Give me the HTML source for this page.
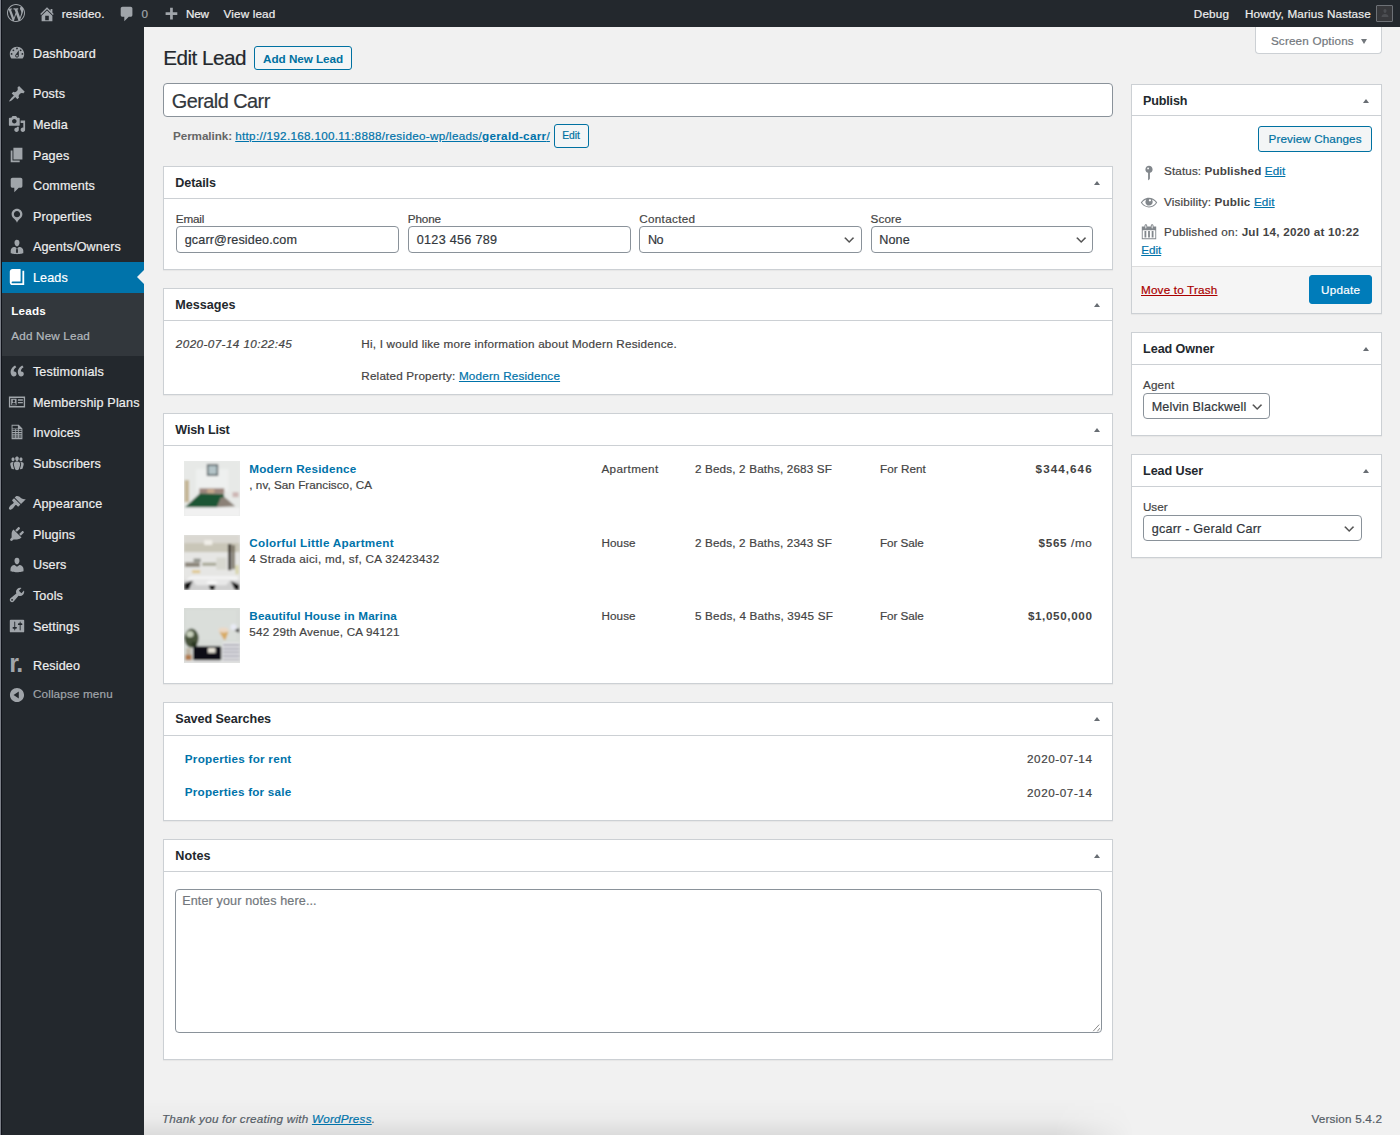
<!DOCTYPE html>
<html lang="en">
<head>
<meta charset="utf-8">
<title>Edit Lead ‹ resideo. — WordPress</title>
<style>
*{box-sizing:border-box}
html,body{margin:0;padding:0}
body{width:1400px;height:1135px;overflow:hidden;background:#f1f1f1;font-family:"Liberation Sans",sans-serif;font-size:11.7px;color:#444;line-height:1.4;position:relative;-webkit-text-stroke:.2px}
a{color:#0073aa;text-decoration:underline}
svg{display:block}
/* ---------- admin bar ---------- */
#bar{position:absolute;left:0;top:0;width:1400px;height:27.4px;background:#23282d;color:#eee;font-size:11.7px;z-index:5}
#bar .t{position:absolute;top:0;line-height:27px;white-space:nowrap;color:#eee}
#bar .i{position:absolute}
/* ---------- admin menu ---------- */
#menu{position:absolute;left:0;top:27px;width:144px;height:1108px;background:#23282d;z-index:4}
#menu ul{list-style:none;margin:0;padding:0}
#menu > ul{padding-top:10.9px}
#menu li.m{height:30.6px;position:relative;color:#eee;font-size:12.6px;line-height:32.4px;padding-left:32.9px;white-space:nowrap;letter-spacing:.15px}
#menu li.m svg{position:absolute;left:7.5px;top:6.3px;width:18px;height:18px;fill:#a0a5aa}
#menu li.sep{height:9.9px}
#menu li.cur{background:#0073aa;color:#fff}
#menu li.cur svg{fill:#fff}
#menu li.cur:after{content:"";position:absolute;right:0;top:50%;margin-top:-7.2px;border:7.2px solid transparent;border-right-color:#f1f1f1}
#menu li.sub{background:#32373c;height:63.4px;padding:6.3px 0 7.2px;font-size:11.7px}
#menu li.sub div{padding:0 11.3px;height:24.9px;line-height:24.9px;color:#b4b9be;letter-spacing:.17px}
#menu li.sub div.on{color:#fff;font-weight:bold}
#menu li.col{color:#a0a5aa;font-size:11.7px}

/* ---------- content ---------- */
#content{position:absolute;left:0;top:0;width:1400px;height:1135px}
.abs{position:absolute}
h1{position:absolute;left:163.2px;top:45.1px;margin:0;font-size:20.7px;font-weight:400;color:#23282d;line-height:1.3;white-space:nowrap}
.btn{position:absolute;border:1px solid #0071a1;border-radius:3px;background:#f3f5f6;color:#0071a1;font-size:11.7px;text-align:center;white-space:nowrap;text-decoration:none}
.btn.b{font-weight:bold}
#screenopt{position:absolute;left:1255.4px;top:27px;width:126.4px;height:27.2px;background:#fff;border:1px solid #ccd0d4;border-top:none;border-radius:0 0 4px 4px;color:#72777c;font-size:11.7px;line-height:28px;padding-left:14.5px}
#title{position:absolute;left:163.4px;top:83.3px;width:949.4px;height:33.9px;border:1px solid #8a929a;border-radius:4px;background:#fff;font-size:19.9px;line-height:35.2px;padding-left:7.4px;color:#32373c;white-space:nowrap}
#perma{position:absolute;left:173px;top:127.5px;font-size:11.7px;line-height:16.4px;color:#666;white-space:nowrap}
#perma b{color:#666}
.box{position:absolute;background:#fff;border:1px solid #ccd0d4;box-shadow:0 1px 1px rgba(0,0,0,.04)}
.box h2{margin:0;height:31.8px;border-bottom:1px solid #ccd0d4;font-size:12.6px;font-weight:bold;color:#23282d;line-height:32.2px;padding-left:11.3px;white-space:nowrap}
.box .tg{position:absolute;right:12.1px;top:14px;width:0;height:0;border:3.7px solid transparent;border-top:none;border-bottom:4.9px solid #686d73}
.L{left:163px;width:950px}
.R{left:1130.8px;width:251.4px}
.lbl{position:absolute;font-size:11.7px;line-height:16px;color:#444;white-space:nowrap}
.inp{position:absolute;height:26.6px;border:1px solid #8a929a;border-radius:4px;background:#fff;font-size:12.6px;line-height:26.4px;padding-left:7.5px;color:#32373c;white-space:nowrap}
.inp svg{position:absolute;right:4.5px;top:6px;width:14.4px;height:14.4px}
.tx{position:absolute;white-space:nowrap;font-size:11.7px;line-height:16.4px;color:#444}
.tx b{color:#444}
.lk{color:#0073aa;font-weight:bold;text-decoration:none}
#foot-l{position:absolute;left:162px;top:1111px;font-size:11.7px;font-style:italic;color:#555d66;line-height:16px;white-space:nowrap}
#foot-r{position:absolute;left:1311.4px;top:1111px;font-size:11.7px;color:#555d66;line-height:16px;white-space:nowrap}
#botgrad{position:absolute;left:144px;top:1098px;width:990px;height:37px;background:linear-gradient(to bottom,rgba(0,0,0,0),rgba(0,0,0,.025) 55%,rgba(0,0,0,.09));-webkit-mask-image:linear-gradient(to right,#000 92%,transparent);mask-image:linear-gradient(to right,#000 92%,transparent)}
.th{position:absolute;left:184.3px;width:55.6px;height:55.3px;background:#e6e6e6;overflow:hidden}
.th svg{width:100%;height:100%}
#screenopt i{position:absolute;left:104.2px;top:11.8px;border:3.8px solid transparent;border-bottom:none;border-top:5.4px solid #72777c}
.rlogo{position:absolute;left:9.2px;top:-1.2px;font-size:25px;line-height:normal;font-weight:bold;color:#a0a5aa;letter-spacing:-1.3px;-webkit-text-stroke:0}
#edge{position:absolute;left:0;top:0;width:1px;height:1135px;background:#7b7f88;z-index:9}
#edge2{position:absolute;left:1px;top:0;width:1px;height:1135px;background:#10131a;z-index:9}
b,.b,h2,.lk,#menu li.sub div.on{-webkit-text-stroke:0}
/*FIT*/
#b1{letter-spacing:0.174px}
#b3{letter-spacing:-0.196px}
#b4{letter-spacing:0.157px}
#b5{letter-spacing:0.166px}
#b6{letter-spacing:0.168px}
#so{letter-spacing:0.173px}
#h1{letter-spacing:-0.520px}
#anl{letter-spacing:-0.046px}
#ttl{letter-spacing:-0.543px}
#pm1{letter-spacing:-0.081px}
#pm2{letter-spacing:0.298px}
#pme{letter-spacing:-0.043px}
#hd1{letter-spacing:-0.094px}
#l1{letter-spacing:-0.163px}
#l2{letter-spacing:-0.133px}
#l3{letter-spacing:0.332px}
#l4{letter-spacing:0.078px}
#i1{letter-spacing:0.135px}
#i2{letter-spacing:0.309px}
#i3{letter-spacing:-0.473px}
#i4{letter-spacing:0.083px}
#hd2{letter-spacing:-0.016px}
#m1{letter-spacing:0.415px}
#m2{letter-spacing:0.215px}
#m3{letter-spacing:0.191px}
#hd3{letter-spacing:-0.174px}
#w1a{letter-spacing:0.199px}
#w1b{letter-spacing:0.035px}
#w1c{letter-spacing:0.362px}
#w1d{letter-spacing:0.166px}
#w1e{letter-spacing:0.057px}
#w1f{letter-spacing:1.047px}
#w2a{letter-spacing:0.297px}
#w2b{letter-spacing:0.280px}
#w2c{letter-spacing:0.112px}
#w2d{letter-spacing:0.166px}
#w2e{letter-spacing:-0.063px}
#w2f{letter-spacing:0.647px}
#w3a{letter-spacing:0.163px}
#w3b{letter-spacing:0.198px}
#w3c{letter-spacing:0.112px}
#w3d{letter-spacing:0.204px}
#w3e{letter-spacing:-0.063px}
#w3f{letter-spacing:0.611px}
#hd4{letter-spacing:-0.061px}
#s1{letter-spacing:0.245px}
#s2{letter-spacing:0.209px}
#s3{letter-spacing:0.569px}
#s4{letter-spacing:0.569px}
#hd5{letter-spacing:0.044px}
#ph{letter-spacing:0.123px}
#hd6{letter-spacing:-0.198px}
#pv{letter-spacing:0.103px}
#p1{letter-spacing:0.107px}
#p2{letter-spacing:0.157px}
#p3{letter-spacing:0.246px}
#p4{letter-spacing:-0.040px}
#p5{letter-spacing:0.187px}
#upd{letter-spacing:0.254px}
#hd7{letter-spacing:-0.073px}
#l5{letter-spacing:0.190px}
#i5{letter-spacing:0.143px}
#hd8{letter-spacing:-0.107px}
#l6{letter-spacing:0.032px}
#i6{letter-spacing:0.218px}
#f1{letter-spacing:0.226px}
#f2{letter-spacing:0.197px}
/*ENDFIT*/
</style>
</head>
<body>
<div id="edge"></div><div id="edge2"></div>
<div id="bar">
<svg viewBox="0 0 20 20" style="position:absolute;left:6.6px;top:4.3px;width:18px;height:18px;fill:#a0a5aa"><path fill-rule="evenodd" d="M20 10c0-5.51-4.49-10-10-10C4.48 0 0 4.49 0 10c0 5.52 4.48 10 10 10 5.51 0 10-4.48 10-10zM7.78 15.37L4.37 6.22c.55-.02 1.17-.08 1.17-.08.5-.06.44-1.13-.06-1.11 0 0-1.45.11-2.37.11-.18 0-.37 0-.58-.01C4.12 2.69 6.87 1.11 10 1.11c2.33 0 4.45.87 6.05 2.34-.68-.11-1.65.39-1.65 1.58 0 .74.45 1.36.9 2.1.35.61.55 1.36.55 2.46 0 1.49-1.4 5-1.4 5l-3.03-8.37c.54-.02.82-.17.82-.17.5-.05.44-1.25-.06-1.22 0 0-1.44.12-2.38.12-.87 0-2.33-.12-2.33-.12-.5-.03-.56 1.2-.06 1.22l.92.08 1.26 3.41zM17.41 10c.24-.64.74-1.87.43-4.25.7 1.29 1.05 2.71 1.05 4.25 0 3.29-1.73 6.24-4.4 7.78.97-2.59 1.94-5.2 2.92-7.78zM6.1 18.09C3.12 16.65 1.11 13.53 1.11 10c0-1.3.23-2.48.72-3.59C3.25 10.3 4.67 14.2 6.1 18.09zm4.03-6.63l2.58 6.98c-.86.29-1.76.45-2.71.45-.79 0-1.57-.11-2.29-.33.81-2.38 1.62-4.74 2.42-7.1z"/></svg><svg viewBox="0 0 20 20" style="position:absolute;left:38.1px;top:4.6px;width:18px;height:18px;fill:#a0a5aa"><path fill-rule="evenodd" d="M16 8.5l1.53 1.53-1.06 1.06L10 4.62l-6.47 6.47-1.06-1.06L10 2.5l4 4v-2h2v4zm-6-2.46l6 5.99V18H4v-5.970zM12 17v-5H8v5h4z"/></svg><svg viewBox="0 0 20 20" style="position:absolute;left:118.1px;top:5.4px;width:18px;height:18px;fill:#a0a5aa"><path fill-rule="evenodd" d="M5 2h9c1.1 0 2 .9 2 2v7c0 1.1-.9 2-2 2h-2l-5 5v-5H5c-1.1 0-2-.9-2-2V4c0-1.1.9-2 2-2z"/></svg><svg viewBox="0 0 20 20" style="position:absolute;left:162.2px;top:6.3px;width:18px;height:18px;fill:#a0a5aa"><path fill-rule="evenodd" d="M17 7v3h-5v5H9v-5H4V7h5V2h3v5h5z"/></svg><i style="position:absolute;left:1376px;top:4.9px;width:17px;height:17px;background:#37383b;border:1.4px solid #6d7176;border-radius:1px"></i><svg viewBox="0 0 20 20" style="position:absolute;left:1379.5px;top:8.4px;width:10px;height:10px;fill:#4c4e52"><path d="M10 2c2 0 3 1.600 3 3.600 0 2.400-1.200 4.400-3 4.400S7 8 7 5.600C7 3.600 8 2 10 2zM3 18c0-4 3-6 7-6s7 2 7 6z"/></svg>
  <span class="t" id="b1" style="left:61.7px">resideo.</span>
  <span class="t" id="b2" style="left:141.4px;color:#a0a5aa">0</span>
  <span class="t" id="b3" style="left:186px">New</span>
  <span class="t" id="b4" style="left:223.5px">View lead</span>
  <span class="t" id="b5" style="left:1193.8px">Debug</span>
  <span class="t" id="b6" style="left:1244.9px">Howdy, Marius Nastase</span>
</div>
<div id="menu">
<ul>
  <li class="m"><svg viewBox="0 0 20 20"><path fill-rule="evenodd" d="M3.76 16h12.48c1.1-1.37 1.76-3.11 1.76-5 0-4.42-3.58-8-8-8s-8 3.58-8 8c0 1.89.66 3.63 1.76 5zM10 4c.55 0 1 .45 1 1s-.45 1-1 1-1-.45-1-1 .45-1 1-1zM6 6c.55 0 1 .45 1 1s-.45 1-1 1-1-.45-1-1 .45-1 1-1zm8 0c.55 0 1 .45 1 1s-.45 1-1 1-1-.45-1-1 .45-1 1-1zm-5.370 5.550L12 7v6c0 1.100-.9 2-2 2s-2-.9-2-2c0-.57.24-1.080.63-1.450zM4 10c.55 0 1 .45 1 1s-.45 1-1 1-1-.45-1-1 .45-1 1-1zm12 0c.55 0 1 .45 1 1s-.45 1-1 1-1-.45-1-1 .45-1 1-1zm-5 3c0-.55-.45-1-1-1s-1 .45-1 1 .45 1 1 1 1-.45 1-1z"/></svg>Dashboard</li>
  <li class="sep"></li>
  <li class="m"><svg viewBox="0 0 20 20"><path fill-rule="evenodd" d="M10.44 3.02l1.82-1.82 6.36 6.35-1.83 1.82c-1.05-.68-2.48-.57-3.41.36l-.75.75c-.92.93-1.04 2.35-.35 3.41l-1.83 1.82-2.41-2.41-2.8 2.79c-.42.42-3.38 2.71-3.8 2.29s1.86-3.39 2.28-3.81l2.79-2.79L4.1 9.36l1.83-1.82c1.05.69 2.48.57 3.4-.36l.75-.75c.93-.92 1.05-2.35.36-3.41z"/></svg>Posts</li>
  <li class="m"><svg viewBox="0 0 20 20"><path fill-rule="evenodd" d="M13 11V4c0-.55-.45-1-1-1h-1.670L9 1H5L3.670 3H2c-.55 0-1 .45-1 1v7c0 .55.45 1 1 1h10c.55 0 1-.45 1-1zM7 4.500c1.380 0 2.500 1.120 2.500 2.500S8.380 9.500 7 9.500 4.500 8.380 4.500 7 5.620 4.500 7 4.500zM14 6h5v10.500c0 1.380-1.120 2.500-2.500 2.500S14 17.880 14 16.500s1.120-2.500 2.500-2.500c.17 0 .34.020.5.050V9h-3V6zm-4 8.050V13h2v3.500c0 1.380-1.120 2.500-2.500 2.500S7 17.880 7 16.500 8.120 14 9.500 14c.17 0 .34.020.5.050z"/></svg>Media</li>
  <li class="m"><svg viewBox="0 0 20 20"><path fill-rule="evenodd" d="M6 15V2h10v13H6zm-1 1h8v2H3V5h2v11z"/></svg>Pages</li>
  <li class="m"><svg viewBox="0 0 20 20"><path fill-rule="evenodd" d="M5 2h9c1.1 0 2 .9 2 2v7c0 1.1-.9 2-2 2h-2l-5 5v-5H5c-1.1 0-2-.9-2-2V4c0-1.1.9-2 2-2z"/></svg>Comments</li>
  <li class="m"><svg viewBox="0 0 20 20"><path fill-rule="evenodd" d="M10 2C6.690 2 4 4.690 4 8c0 2.020 1.170 3.710 2.530 4.890.43.37 1.180.96 1.850 1.830.74.97 1.410 2.010 1.620 2.710.21-.7.88-1.740 1.620-2.710.67-.87 1.420-1.460 1.850-1.830C14.830 11.710 16 10.020 16 8c0-3.310-2.690-6-6-6zm0 2.560c1.900 0 3.440 1.540 3.440 3.440S11.900 11.440 10 11.440 6.560 9.900 6.560 8 8.100 4.560 10 4.560z"/></svg>Properties</li>
  <li class="m"><svg viewBox="0 0 20 20"><path fill-rule="evenodd" d="M7.300 6l-.03-.19c-.04-.37-.05-.73-.03-1.080.02-.36.100-.71.25-1.040.14-.32.31-.61.52-.86s.49-.46.83-.6c.34-.15.72-.23 1.130-.23.69 0 1.260.2 1.710.59s.76.87.91 1.440.18 1.160.09 1.780l-.03.19c-.01.09-.05.25-.11.48-.05.24-.12.47-.2.69-.08.21-.19.45-.34.72-.14.27-.3.49-.47.69-.18.19-.4.34-.67.48-.27.13-.55.19-.86.19s-.59-.06-.87-.19c-.26-.13-.49-.29-.67-.5-.18-.2-.34-.42-.49-.66-.15-.25-.26-.49-.34-.73-.09-.25-.16-.47-.21-.67-.06-.21-.100-.37-.12-.5zm9.200 6.240c.41.7.5 1.410.5 2.140v2.490c0 .03-.12.080-.29.13-.18.04-.42.13-.97.27-.55.12-1.100.24-1.650.34s-1.190.19-1.950.27c-.75.08-1.460.12-2.130.12-.68 0-1.390-.04-2.140-.12-.75-.07-1.400-.17-1.980-.27-.58-.11-1.080-.23-1.560-.34-.49-.11-.8-.21-1.060-.29L3 16.870v-2.490c0-.75.07-1.460.46-2.150s.81-1.250 1.500-1.680C5.660 10.120 7.190 10 8 10l1.670 1.670L9 13v3l1.020 1.080L11 16v-3l-.68-1.330L11.970 10c.77 0 2.200.07 2.900.52.71.45 1.210 1.020 1.630 1.720z"/></svg>Agents/Owners</li>
  <li class="m cur"><svg viewBox="0 0 20 20"><path fill-rule="evenodd" d="M16 3h2v16H5c-1.660 0-3-1.340-3-3V4c0-1.660 1.340-3 3-3h9v14H5c-.55 0-1 .45-1 1s.45 1 1 1h11V3z"/></svg>Leads</li>
  <li class="sub"><div class="on">Leads</div><div>Add New Lead</div></li>
  <li class="m"><svg viewBox="0 0 20 20"><path fill-rule="evenodd" d="M9.490 13.220c0-.74-.2-1.380-.61-1.900-.62-.78-1.830-.88-2.530-.72-.29-1.650 1.110-3.750 2.920-4.650L7.880 3.930C4.950 5.320 2.440 8.440 2.980 12.340c.29 2.140 1.640 3.760 3.530 3.760.83 0 1.530-.26 2.120-.77.57-.51.86-1.210.86-2.110zm8.050 0c0-.74-.2-1.380-.61-1.900-.63-.78-1.830-.88-2.530-.72-.29-1.650 1.110-3.750 2.920-4.650l-1.390-2.020c-2.930 1.390-5.440 4.510-4.900 8.410.29 2.140 1.640 3.760 3.530 3.760.83 0 1.540-.26 2.130-.77.57-.51.85-1.210.85-2.110z"/></svg>Testimonials</li>
  <li class="m"><svg viewBox="0 0 20 20"><path fill-rule="evenodd" d="M1 4h18v12H1V4zm1.500 1.500v9h15v-9h-15zM3.500 6.500h6v7h-6v-7zM6.500 7.500c-.8 0-1.300.7-1.300 1.500s.5 1.600 1.300 1.600 1.300-.8 1.300-1.600-.5-1.500-1.300-1.500zM4.200 13c0-1.300 1-2.100 2.300-2.100s2.300.8 2.300 2.100H4.200zM11 7h5.500v1.500H11V7zm0 3h5.500v1.500H11V10z"/></svg>Membership Plans</li>
  <li class="m"><svg viewBox="0 0 20 20"><path fill-rule="evenodd" d="M12 2l4 4v12H4V2h8zm-1 4V3H5v3h6zM8 8V7H5v1h3zm3 0V7H9v1h2zm4 0V7h-3v1h3zM8 10V9H5v1h3zm3 0V9H9v1h2zm4 0V9h-3v1h3zm-7 2v-1H5v1h3zm3 0v-1H9v1h2zm4 0v-1h-3v1h3zm-7 2v-1H5v1h3zm3 0v-1H9v1h2zm4 0v-1h-3v1h3zm-7 2v-1H5v1h3zm3 0v-1H9v1h2zm4 0v-1h-3v1h3z"/></svg>Invoices</li>
  <li class="m"><svg viewBox="0 0 20 20"><path fill-rule="evenodd" d="M8.030 4.460c-.29 1.280.55 3.460 1.970 3.460 1.410 0 2.250-2.180 1.960-3.460-.22-.98-1.080-1.630-1.960-1.630-.89 0-1.740.65-1.970 1.630zm-4.130.9c-.25 1.080.47 2.930 1.670 2.930s1.920-1.850 1.670-2.930c-.19-.83-.92-1.390-1.670-1.390s-1.480.56-1.670 1.390zm8.860 0c-.25 1.080.47 2.930 1.660 2.930 1.200 0 1.920-1.850 1.670-2.930-.19-.83-.92-1.390-1.670-1.390-.74 0-1.470.56-1.660 1.390zm-.59 11.430l1.250-4.300C14.200 10 12.710 8.470 10 8.470c-2.720 0-4.210 1.530-3.440 4.020l1.260 4.300C8.050 17.510 9 18 10 18c.98 0 1.940-.49 2.170-1.210zm-6.100-7.630c-.49.67-.96 1.830-.42 3.590l1.120 3.790c-.34.2-.77.31-1.200.31-.85 0-1.650-.41-1.850-1.030l-1.070-3.650c-.65-2.110.61-3.400 2.920-3.400.27 0 .54.020.79.060-.100.100-.2.22-.29.33zm8.350-.39c2.310 0 3.580 1.290 2.920 3.400l-1.070 3.650c-.2.62-1 1.030-1.850 1.030-.43 0-.86-.11-1.200-.31l1.110-3.770c.55-1.780.08-2.940-.42-3.610-.08-.11-.18-.23-.28-.33.25-.04.51-.06.79-.06z"/></svg>Subscribers</li>
  <li class="sep"></li>
  <li class="m"><svg viewBox="0 0 20 20"><path fill-rule="evenodd" d="M14.480 11.060L7.410 3.990l1.500-1.500c.5-.56 2.300-.47 3.510.32 1.210.8 1.430 1.280 2.910 2.100 1.180.64 2.450 1.260 4.450.85zm-.71.71L6.700 4.700 4.930 6.470c-.39.39-.39 1.020 0 1.410l1.060 1.060c.39.39.39 1.030 0 1.420-.6.6-1.430 1.110-2.210 1.690-.35.26-.7.53-1.010.84C1.430 14.230.4 16.080 1.400 17.070c.99 1 2.840-.03 4.180-1.360.31-.31.58-.66.85-1.020.57-.78 1.080-1.610 1.690-2.210.39-.39 1.020-.39 1.410 0l1.060 1.060c.39.39 1.020.39 1.410 0z"/></svg>Appearance</li>
  <li class="m"><svg viewBox="0 0 20 20"><path fill-rule="evenodd" d="M13.110 4.360L9.870 7.600 8 5.730l3.240-3.240c.35-.34 1.050-.2 1.560.32.52.51.66 1.210.31 1.550zm-8 1.770l.91-1.120 9.010 9.010-1.190.84c-.71.71-2.630 1.160-3.820 1.160H6.140L4.900 17.260c-.59.59-1.540.59-2.120 0-.59-.58-.59-1.530 0-2.120l1.240-1.240v-3.880c0-1.130.4-3.190 1.090-3.890zm7.260 3.970l3.240-3.240c.34-.35 1.040-.21 1.550.31.52.51.66 1.210.31 1.550l-3.240 3.250z"/></svg>Plugins</li>
  <li class="m"><svg viewBox="0 0 20 20"><path fill-rule="evenodd" d="M10 9.250c-2.270 0-2.730-3.440-2.730-3.440C7 4.020 7.820 2 9.970 2c2.160 0 2.980 2.020 2.710 3.810 0 0-.41 3.440-2.680 3.440zm0 2.570L12.720 10c2.390 0 4.520 2.330 4.520 4.530v2.490s-3.650 1.130-7.240 1.130c-3.650 0-7.240-1.130-7.240-1.130v-2.490c0-2.250 1.940-4.480 4.470-4.480z"/></svg>Users</li>
  <li class="m"><svg viewBox="0 0 20 20"><path fill-rule="evenodd" d="M16.680 9.770c-1.340 1.340-3.300 1.670-4.950.99l-5.410 6.520c-.99.99-2.590.99-3.580 0s-.99-2.590 0-3.570l6.520-5.420c-.68-1.650-.35-3.610.99-4.950 1.280-1.280 3.120-1.620 4.720-1.060l-2.890 2.890 2.820 2.820 2.860-2.870c.53 1.580.18 3.390-1.080 4.650zM3.810 16.210c.4.39 1.040.39 1.430 0 .4-.4.4-1.040 0-1.430-.39-.4-1.030-.4-1.430 0-.39.39-.39 1.030 0 1.430z"/></svg>Tools</li>
  <li class="m"><svg viewBox="0 0 20 20"><path fill-rule="evenodd" d="M18 16V4c0-.55-.45-1-1-1H3c-.55 0-1 .45-1 1v12c0 .55.45 1 1 1h14c.55 0 1-.45 1-1zM8 11h1c.55 0 1 .45 1 1s-.45 1-1 1H8v1.500c0 .28-.22.5-.5.5s-.5-.22-.5-.5V13H6c-.55 0-1-.45-1-1s.45-1 1-1h1V5.500c0-.28.22-.5.5-.5s.5.22.5.5V11zm5-2h-1c-.55 0-1-.45-1-1s.45-1 1-1h1V5.500c0-.28.22-.5.5-.5s.5.22.5.5V7h1c.55 0 1 .45 1 1s-.45 1-1 1h-1v5.500c0 .28-.22.5-.5.5s-.5-.22-.5-.5V9z"/></svg>Settings</li>
  <li class="sep" style="height:9.1px"></li>
  <li class="m"><span class="rlogo">r.</span>Resideo</li>
  <li class="m col" style="margin-top:-2.6px"><svg viewBox="0 0 20 20" style="top:7.3px"><path fill-rule="evenodd" d="M10 2.160c4.330 0 7.840 3.510 7.840 7.840s-3.510 7.840-7.840 7.840S2.160 14.330 2.160 10 5.670 2.160 10 2.160zm2 11.720V6.120L6.180 9.970z"/></svg>Collapse menu</li>
</ul>
</div>
<div id="content">
<div id="botgrad"></div>
<div id="screenopt"><span id="so">Screen Options</span><i></i></div>
<h1 id="h1">Edit Lead</h1>
<a class="btn b" style="left:254.2px;top:46.2px;width:97.8px;height:24px;line-height:23px"><span id="anl">Add New Lead</span></a>
<div id="title"><span id="ttl">Gerald Carr</span></div>
<div id="perma"><b id="pm1">Permalink:</b> <a id="pm2">http://192.168.100.11:8888/resideo-wp/leads/<b style="color:#0073aa">gerald-carr</b>/</a></div>
<a class="btn" style="left:553.6px;top:124.3px;width:35px;height:23.6px;line-height:21.6px;font-size:10.3px"><span id="pme">Edit</span></a>

<!-- Details -->
<div class="box L" style="top:165.8px;height:104px">
  <h2><span id="hd1">Details</span></h2><i class="tg"></i>
</div>
<div class="lbl" id="l1" style="left:175.8px;top:210.9px">Email</div>
<div class="lbl" id="l2" style="left:407.8px;top:210.9px">Phone</div>
<div class="lbl" id="l3" style="left:639.2px;top:210.9px">Contacted</div>
<div class="lbl" id="l4" style="left:870.6px;top:210.9px">Score</div>
<div class="inp" style="left:176.2px;top:226.2px;width:223.3px"><span id="i1">gcarr@resideo.com</span></div>
<div class="inp" style="left:408.2px;top:226.2px;width:223.3px"><span id="i2">0123 456 789</span></div>
<div class="inp" style="left:639.4px;top:226.2px;width:222.6px"><span id="i3">No</span><svg viewBox="0 0 20 20"><path d="M5 6l5 5 5-5 2 1-7 7-7-7 2-1z" fill="#555"/></svg></div>
<div class="inp" style="left:870.8px;top:226.2px;width:222.6px"><span id="i4">None</span><svg viewBox="0 0 20 20"><path d="M5 6l5 5 5-5 2 1-7 7-7-7 2-1z" fill="#555"/></svg></div>

<!-- Messages -->
<div class="box L" style="top:288px;height:107px">
  <h2><span id="hd2">Messages</span></h2><i class="tg"></i>
</div>
<div class="tx" id="m1" style="left:175.8px;top:335.6px;font-style:italic">2020-07-14 10:22:45</div>
<div class="tx" id="m2" style="left:361.3px;top:335.6px">Hi, I would like more information about Modern Residence.</div>
<div class="tx" id="m3" style="left:361.3px;top:368.1px">Related Property: <a>Modern Residence</a></div>

<!-- Wish List -->
<div class="box L" style="top:413px;height:271px">
  <h2 style="height:32.4px;line-height:33px"><span id="hd3">Wish List</span></h2><i class="tg"></i>
</div>
<div class="th" style="top:460.8px"><svg viewBox="0 0 55 55" preserveAspectRatio="none"><defs><filter id="bl" x="-5%" y="-5%" width="110%" height="110%"><feGaussianBlur stdDeviation="0.8"/></filter></defs>
<rect width="55" height="55" fill="#e9ebe9"/>
<g filter="url(#bl)">
<rect x="0" y="0" width="55" height="55" fill="#e7e9e7"/>
<rect x="12" y="8" width="32" height="22" fill="#eef0ef"/>
<rect x="0.5" y="19" width="4.5" height="22" fill="#c4b594"/>
<rect x="22.6" y="3.1" width="11.2" height="11.8" fill="#566064"/>
<rect x="24.2" y="4.8" width="8" height="8.4" fill="#b4c4c8"/>
<rect x="15.2" y="27.2" width="24.6" height="5.4" fill="#9c857c"/>
<rect x="23" y="28" width="7" height="4" fill="#c8a88c"/>
<polygon points="15.7,32.3 39.2,32.9 40,36 32.4,46.1 0.9,46.1" fill="#1d5636"/>
<polygon points="36.5,36 41,36.6 50.7,44.9 32.4,46.1" fill="#8b8177"/>
<rect x="48" y="31" width="6" height="5" fill="#cdb6b4"/>
<rect x="0" y="46.6" width="55" height="8.4" fill="#f1f1f1"/>
</g></svg></div>
<div class="tx" id="w1a" style="left:249.3px;top:461.3px"><a class="lk">Modern Residence</a></div>
<div class="tx" id="w1b" style="left:249.3px;top:477.3px">, nv, San Francisco, CA</div>
<div class="tx" id="w1c" style="left:601.4px;top:461.3px">Apartment</div>
<div class="tx" id="w1d" style="left:694.9px;top:461.3px">2 Beds, 2 Baths, 2683 SF</div>
<div class="tx" id="w1e" style="left:880px;top:461.3px">For Rent</div>
<div class="tx" id="w1f" style="left:1035.6px;top:461.3px"><b>$344,646</b></div>

<div class="th" style="top:534.6px"><svg viewBox="0 0 55 55" preserveAspectRatio="none">
<rect width="55" height="55" fill="#e4e4e2"/>
<g filter="url(#bl)">
<rect x="0" y="0" width="55" height="9" fill="#dad8d2"/>
<rect x="0" y="8" width="55" height="9.5" fill="#c9c6b8"/>
<rect x="20" y="5" width="8" height="5" fill="#f0eee8"/>
<rect x="0" y="17" width="55" height="25" fill="#e6e6e4"/>
<rect x="43.6" y="9" width="3.2" height="26" fill="#352f26"/>
<rect x="47.8" y="10" width="2.4" height="24" fill="#6e6756"/>
<rect x="51" y="30" width="3" height="9" fill="#d8d4a8"/>
<rect x="0.9" y="27.2" width="14.8" height="4.6" fill="#8c867a"/>
<rect x="9.5" y="23.5" width="7" height="3.2" fill="#8e9088"/>
<rect x="18" y="27.5" width="14" height="3.2" fill="#a8a896"/>
<rect x="32" y="22.5" width="10" height="12" fill="#d8d8d0"/>
<rect x="8" y="35" width="8" height="3" fill="#e0c890"/>
<polygon points="7,41 52,41 55,46 48,46 44,44 10,44 7,46 0,46" fill="#f4f4f4"/>
<rect x="0" y="45" width="55" height="10" fill="#cfcfcf"/>
<polygon points="8,44 46,44 42,50 12,50" fill="#e8e8e8"/>
<ellipse cx="27.7" cy="47.5" rx="5.5" ry="2.2" fill="#f6f6f6"/>
<polygon points="0.5,54.5 0.5,48 8.5,45.5 5,54" fill="#0c0c0c"/>
<polygon points="24.5,50 31,50 30,54.5 26,54.5" fill="#0c0c0c"/>
<polygon points="46.5,46 54.5,49.5 54.5,55 50,54" fill="#0c0c0c"/>
</g></svg></div>
<div class="tx" id="w2a" style="left:249.3px;top:534.8px"><a class="lk">Colorful Little Apartment</a></div>
<div class="tx" id="w2b" style="left:249.3px;top:550.8px">4 Strada aici, md, sf, CA 32423432</div>
<div class="tx" id="w2c" style="left:601.4px;top:534.8px">House</div>
<div class="tx" id="w2d" style="left:694.9px;top:534.8px">2 Beds, 2 Baths, 2343 SF</div>
<div class="tx" id="w2e" style="left:880px;top:534.8px">For Sale</div>
<div class="tx" id="w2f" style="left:1038.6px;top:534.8px"><b>$565</b> /mo</div>

<div class="th" style="top:607.8px"><svg viewBox="0 0 55 55" preserveAspectRatio="none">
<rect width="55" height="55" fill="#d8dcd8"/>
<g filter="url(#bl)">
<rect x="0" y="0" width="55" height="55" fill="#d7dbd7"/>
<rect x="2" y="2" width="50" height="30" fill="#dadeda"/>
<ellipse cx="7.5" cy="30" rx="7" ry="9.5" fill="#46523a"/>
<ellipse cx="6" cy="26" rx="3.5" ry="3" fill="#c8d0bc"/>
<ellipse cx="10" cy="36" rx="3" ry="2.5" fill="#2c3824"/>
<rect x="2" y="40" width="5" height="7" fill="#c0b8a8"/>
<rect x="1.4" y="46.6" width="6" height="5.4" fill="#b07848"/>
<rect x="8.9" y="38" width="28" height="14" rx="1.5" fill="#0e1018"/>
<rect x="23.8" y="39.8" width="7.4" height="4.8" fill="#e8e4d8"/>
<rect x="38.1" y="34.6" width="16.9" height="18" fill="#f2f2f4"/>
<rect x="38.5" y="36" width="16.5" height="1.8" fill="#9a9aa6"/>
<rect x="38.5" y="39.6" width="16.5" height="1.8" fill="#9a9aa6"/>
<rect x="38.5" y="43.2" width="16.5" height="1.8" fill="#9a9aa6"/>
<rect x="38.5" y="46.8" width="16.5" height="1.8" fill="#9a9aa6"/>
<rect x="38.5" y="50.4" width="16.5" height="1.6" fill="#a4a4ac"/>
<polygon points="35,23.5 44,23.5 41,31.5 39.5,31.5" fill="#d8aa64"/>
<ellipse cx="39" cy="22" rx="5" ry="2.5" fill="#ecd8c4"/>
<polygon points="50,22.5 54.5,20 54.5,24.5" fill="#141414"/>
<ellipse cx="49" cy="19" rx="3" ry="3" fill="#e8eaf4"/>
<rect x="0" y="52.4" width="55" height="2.6" fill="#e2e2e2"/>
</g></svg></div>
<div class="tx" id="w3a" style="left:249.3px;top:608.3px"><a class="lk">Beautiful House in Marina</a></div>
<div class="tx" id="w3b" style="left:249.3px;top:624.3px">542 29th Avenue, CA 94121</div>
<div class="tx" id="w3c" style="left:601.4px;top:608.3px">House</div>
<div class="tx" id="w3d" style="left:694.9px;top:608.3px">5 Beds, 4 Baths, 3945 SF</div>
<div class="tx" id="w3e" style="left:880px;top:608.3px">For Sale</div>
<div class="tx" id="w3f" style="left:1027.9px;top:608.3px"><b>$1,050,000</b></div>

<!-- Saved Searches -->
<div class="box L" style="top:702px;height:119px">
  <h2 style="height:32.9px"><span id="hd4">Saved Searches</span></h2><i class="tg"></i>
</div>
<div class="tx" id="s1" style="left:184.8px;top:750.7px"><a class="lk">Properties for rent</a></div>
<div class="tx" id="s2" style="left:184.8px;top:784.3px"><a class="lk">Properties for sale</a></div>
<div class="tx" id="s3" style="left:1027px;top:751.1px">2020-07-14</div>
<div class="tx" id="s4" style="left:1027px;top:784.8px">2020-07-14</div>

<!-- Notes -->
<div class="box L" style="top:839px;height:221px">
  <h2><span id="hd5">Notes</span></h2><i class="tg"></i>
</div>
<div class="abs" style="left:175.2px;top:889.4px;width:926.4px;height:143.2px;border:1px solid #8a929a;border-radius:4px;background:#fff;font-size:12.6px;color:#72777c;padding:2px 6px;line-height:18px;white-space:nowrap"><span id="ph">Enter your notes here...</span><svg viewBox="0 0 10 10" style="position:absolute;right:0;bottom:0;width:10px;height:10px"><path d="M2.2 9.2L8.2 2.6M6.3 9.4L8.8 6.2" stroke="#8a8a8a" stroke-width="1" fill="none"/></svg></div>

<!-- Publish -->
<div class="box R" style="top:83.6px;height:230px">
  <h2><span id="hd6">Publish</span></h2><i class="tg"></i>
  <div class="abs" style="left:0;right:0;bottom:0;height:47px;background:#f5f5f5;border-top:1px solid #ddd"></div>
</div>
<a class="btn" style="left:1258.2px;top:125.5px;width:113.8px;height:26.6px;line-height:24.6px"><span id="pv">Preview Changes</span></a>
<svg viewBox="0 0 20 20" style="position:absolute;left:1140px;top:163.6px;width:18px;height:18px;fill:#82878c"><path fill-rule="evenodd" d="M14 6c0 1.860-1.280 3.410-3 3.860V16c0 1-2 2-2 2V9.860c-1.720-.45-3-2-3-3.860 0-2.210 1.790-4 4-4s4 1.790 4 4zM8 5c0 .55.45 1 1 1s1-.45 1-1-.45-1-1-1-1 .45-1 1z"/></svg><svg viewBox="0 0 20 20" style="position:absolute;left:1139.9px;top:192.6px;width:18px;height:18px;fill:#82878c"><path fill-rule="evenodd" d="M18.300 9.500C15 4.900 8.500 3.800 3.900 7.200c-1.200.9-2.200 2.100-3 3.400.2.4.5.8.8 1.200 3.300 4.600 9.600 5.600 14.200 2.400.9-.7 1.700-1.400 2.400-2.400.3-.4.5-.8.8-1.200-.3-.4-.5-.8-.8-1.100zm-8.200-2.300c.5-.5 1.300-.5 1.800 0s.5 1.300 0 1.800-1.300.5-1.800 0-.5-1.300 0-1.800zm-.1 7.700c-3.100 0-6-1.600-7.700-4.200C3.500 9 5.100 7.800 7 7.200c-.7.8-1 1.700-1 2.700 0 2.200 1.700 4.100 4 4.100 2.200 0 4.100-1.700 4.100-4v-.1c0-1-.4-2-1.100-2.700 1.900.6 3.500 1.800 4.700 3.500-1.700 2.600-4.600 4.200-7.700 4.200z"/></svg><svg viewBox="0 0 20 20" style="position:absolute;left:1139.8px;top:223px;width:18px;height:18px;fill:#82878c"><path fill-rule="evenodd" d="M15 4h3v14H2V4h3V3c0-.83.67-1.500 1.500-1.500S8 2.170 8 3v1h4V3c0-.83.67-1.500 1.500-1.500S15 2.170 15 3v1zM6 3v2.500c0 .28.22.5.5.5s.5-.22.5-.5V3c0-.28-.22-.5-.5-.5S6 2.720 6 3zm7 0v2.500c0 .28.22.5.5.5s.5-.22.5-.5V3c0-.28-.22-.5-.5-.5s-.5.22-.5.5zm4 14V8H3v9h14zM7 16V9H5v7h2zm4 0V9H9v7h2zm4 0V9h-2v7h2z"/></svg>
<div class="tx" id="p1" style="left:1164.1px;top:163.1px">Status: <b>Published</b> <a>Edit</a></div>
<div class="tx" id="p2" style="left:1164.1px;top:194px">Visibility: <b>Public</b> <a>Edit</a></div>
<div class="tx" id="p3" style="left:1164.1px;top:224px">Published on: <b>Jul 14, 2020 at 10:22</b></div>
<div class="tx" id="p4" style="left:1141.2px;top:242.4px"><a>Edit</a></div>
<div class="tx" id="p5" style="left:1141px;top:281.8px"><a style="color:#a00">Move to Trash</a></div>
<a class="btn" style="left:1309.4px;top:275px;width:62.6px;height:28.8px;line-height:28.2px;background:#007cba;border-color:#007cba;color:#fff"><span id="upd">Update</span></a>

<!-- Lead Owner -->
<div class="box R" style="top:332.2px;height:103.4px">
  <h2><span id="hd7">Lead Owner</span></h2><i class="tg"></i>
</div>
<div class="lbl" id="l5" style="left:1142.9px;top:376.6px">Agent</div>
<div class="inp" style="left:1143.2px;top:392.8px;width:126.6px"><span id="i5">Melvin Blackwell</span><svg viewBox="0 0 20 20"><path d="M5 6l5 5 5-5 2 1-7 7-7-7 2-1z" fill="#555"/></svg></div>

<!-- Lead User -->
<div class="box R" style="top:454.2px;height:103.4px">
  <h2><span id="hd8">Lead User</span></h2><i class="tg"></i>
</div>
<div class="lbl" id="l6" style="left:1142.9px;top:498.9px">User</div>
<div class="inp" style="left:1143.2px;top:514.6px;width:219px"><span id="i6">gcarr - Gerald Carr</span><svg viewBox="0 0 20 20"><path d="M5 6l5 5 5-5 2 1-7 7-7-7 2-1z" fill="#555"/></svg></div>

<div id="foot-l"><span id="f1">Thank you for creating with <a>WordPress</a>.</span></div>
<div id="foot-r"><span id="f2">Version 5.4.2</span></div>
</div>
</body>
</html>
